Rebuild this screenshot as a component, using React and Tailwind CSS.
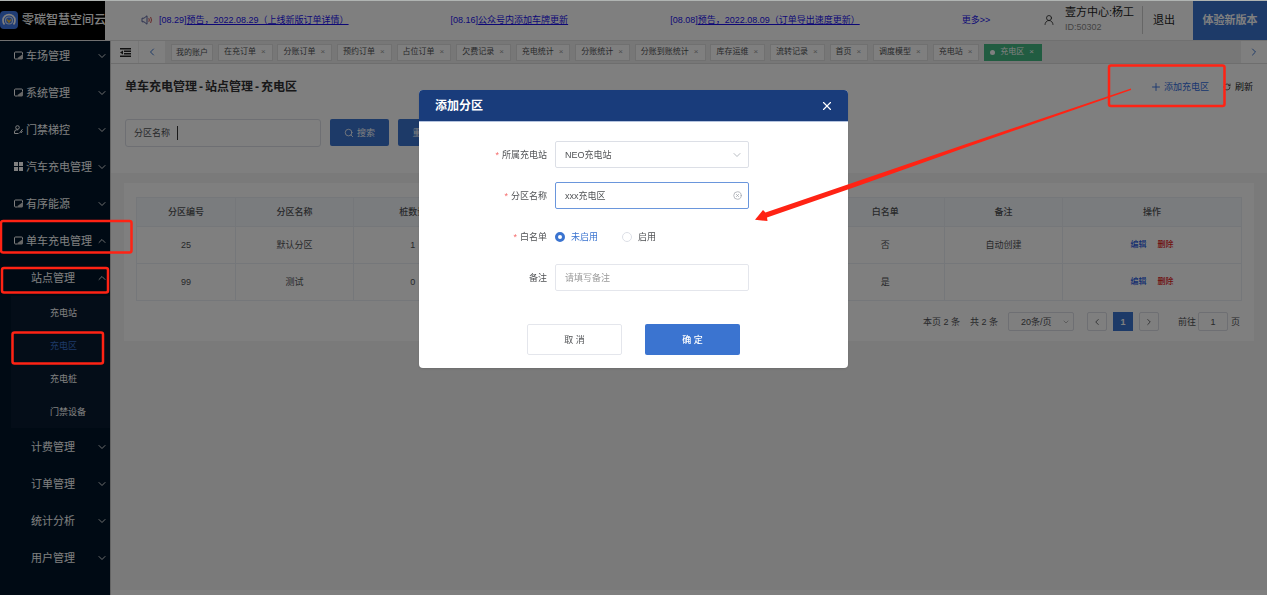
import { useState } from "react";
import {
  ChevronDown,
  ChevronLeft,
  ChevronRight,
  ChevronUp,
  CircleX,
  Plus,
  RotateCw,
  Search,
  UserRound,
  X,
} from "lucide-react";

const notices = [
  { date: "[08.29]", text: "预告，2022.08.29（上线新版订单详情）" },
  { date: "[08.16]", text: "公众号内添加车牌更新" },
  { date: "[08.08]", text: "预告，2022.08.09（订单导出速度更新）" },
];

const tabs = [
  "在充订单",
  "分账订单",
  "预约订单",
  "占位订单",
  "欠费记录",
  "充电统计",
  "分账统计",
  "分账到账统计",
  "库存运维",
  "流转记录",
  "首页",
  "调度模型",
  "充电站",
];

const menu = [
  { label: "车场管理", icon: "board" },
  { label: "系统管理", icon: "board" },
  { label: "门禁梯控", icon: "user" },
  { label: "汽车充电管理", icon: "grid" },
  { label: "有序能源", icon: "board" },
  { label: "单车充电管理", icon: "board", open: true },
];

const stationPages = ["充电站", "充电区", "充电桩", "门禁设备"];
const subMenu = ["计费管理", "订单管理", "统计分析", "用户管理"];

const zones = [
  { id: 25, name: "默认分区", piles: 1, whitelist: "否", remark: "自动创建" },
  { id: 99, name: "测试", piles: 0, whitelist: "是", remark: "" },
];

export default function App() {
  const [modalOpen, setModalOpen] = useState(true);

  return (
    <div className="flex min-h-screen flex-col bg-[#f4f4f4] font-['Liberation_Sans','Noto_Sans_CJK_SC',sans-serif] text-[9px] leading-4 text-[#505255]">
      <Header />

      <div className="flex flex-1">
        <Sidebar />

        <div className="flex min-w-0 flex-1 flex-col border-l border-[#c8c8c8]">
          <TabBar />
          <Toolbar onAdd={() => setModalOpen(true)} />
          <ZoneTable />
          <div className="mt-auto h-[5px] bg-white" />
        </div>
      </div>

      {modalOpen && <ZoneModal onClose={() => setModalOpen(false)} />}
      <Annotations />
    </div>
  );
}

// HEADER
function Header() {
  return (
    <header className="relative z-10 flex h-[41px] items-stretch border-b border-[#e0e0e0] bg-white">
      <div className="flex w-[105px] shrink-0 items-center gap-1 overflow-hidden bg-black text-xs font-medium whitespace-nowrap text-white">
        <Logo />
        零碳智慧空间云
      </div>

      <nav className="flex min-w-0 flex-1 items-center pl-9 whitespace-nowrap text-[#1a10ee]">
        <SpeakerIcon />
        <div className="ml-1.5 flex items-center gap-[102px]">
          {notices.map((n) => (
            <a key={n.date} href="#notice">
              {n.date}
              <span className="underline">{n.text}</span>
            </a>
          ))}
          <a href="#more">更多&gt;&gt;</a>
        </div>
      </nav>

      <div className="flex shrink-0 items-center text-[11px] text-[#222]">
        <UserRound className="mr-2.5 size-3" strokeWidth={1.6} />
        <div className="flex flex-col pb-0.5">
          <span className="leading-[15px]">壹方中心:杨工</span>
          <span className="text-[9px] leading-3.5 text-[#888]">ID:50302</span>
        </div>
        <button className="ml-2 h-7 border-l border-[#ccc] pr-[18px] pl-2.5">退出</button>
        <button className="h-full w-[74px] bg-[#3b74d0] font-bold text-white">
          体验新版本
        </button>
      </div>
    </header>
  );
}

// SIDEBAR
function Sidebar() {
  return (
    <aside className="w-[110px] shrink-0 bg-[#001529] text-[11px] text-white">
      <ul className="-mt-1">
        {menu.map((item) => (
          <li key={item.label}>
            <a href="#menu" className="flex h-[37px] items-center pr-0.5 pl-3.5">
              <MenuIcon name={item.icon} />
              <span className="ml-[3px] flex-1 whitespace-nowrap">{item.label}</span>
              <Arrow open={item.open} />
            </a>
          </li>
        ))}

        <li>
          <a href="#menu" className="flex h-[37px] items-center pr-0.5 pl-[31px]">
            <span className="flex-1">站点管理</span>
            <Arrow open />
          </a>
          <ul className="ml-[11px] bg-[#081a30] text-[9px]">
            {stationPages.map((page) => (
              <li key={page}>
                <a
                  href="#page"
                  className={
                    page === "充电区"
                      ? "flex h-[33px] items-center pl-[39px] text-[#3b74d0]"
                      : "flex h-[33px] items-center pl-[39px]"
                  }
                >
                  {page}
                </a>
              </li>
            ))}
          </ul>
        </li>

        {subMenu.map((label) => (
          <li key={label}>
            <a href="#menu" className="flex h-[37px] items-center pr-0.5 pl-[31px]">
              <span className="flex-1">{label}</span>
              <Arrow />
            </a>
          </li>
        ))}
      </ul>
    </aside>
  );
}

function Arrow({ open }) {
  const Icon = open ? ChevronUp : ChevronDown;
  return <Icon className="size-3 shrink-0 text-[#ddd]" strokeWidth={2} />;
}

// TABS
function TabBar() {
  return (
    <div className="flex h-[23px] items-center border-b border-[#ddd] bg-[#eeeeee] text-[8px] whitespace-nowrap">
      <div className="flex h-full w-[27px] items-center justify-center bg-white pl-0.5">
        <FoldIcon />
      </div>
      <button
        aria-label="向左"
        className="flex h-full w-[27px] items-center justify-center border-l border-[#eee] bg-white text-[#3b74d0]"
      >
        <ChevronLeft className="size-3" />
      </button>

      <div className="ml-1.5 flex w-[871px] justify-between">
        <button className="h-[17px] border border-[#e0e0e0] bg-white px-1">
          我的账户
        </button>
        {tabs.map((tab) => (
          <button
            key={tab}
            className="flex h-[17px] items-center gap-[5px] border border-[#e0e0e0] bg-white pr-1.5 pl-[5px]"
          >
            {tab}
            <span className="text-[#999]">×</span>
          </button>
        ))}
        <button className="flex h-[17px] items-center gap-[5px] bg-[#42b983] pr-2 pl-1.5 text-white">
          <span className="size-[5px] rounded-full bg-white" />
          充电区
          <span>×</span>
        </button>
      </div>

      <button
        aria-label="向右"
        className="ml-auto flex h-full w-[26px] items-center justify-center bg-white text-[#3b74d0]"
      >
        <ChevronRight className="size-3" />
      </button>
    </div>
  );
}

// SEARCH
function Toolbar({ onAdd }) {
  return (
    <div className="h-[109px] bg-white px-3.5 pt-[15px]">
      <div className="flex items-center justify-between">
        <h1 className="text-xs font-bold text-[#303133]">
          单车充电管理<span className="px-0.5">-</span>站点管理
          <span className="px-0.5">-</span>充电区
        </h1>
        <div className="flex items-center gap-3.5">
          <button onClick={onAdd} className="flex items-center gap-0.5 text-[#2f6ce0]">
            <Plus className="size-3" strokeWidth={1.8} />
            添加充电区
          </button>
          <button className="flex items-center gap-1 text-[#222]">
            <RotateCw className="size-2" />
            刷新
          </button>
        </div>
      </div>

      <div className="mt-6 flex items-start gap-[9px]">
        <div className="flex h-7 w-[196px] items-center rounded-[3px] border border-[#dcdfe6] px-2">
          <label htmlFor="zone">分区名称</label>
          <input
            id="zone"
            className="ml-[7px] h-3.5 min-w-0 flex-1 border-l border-[#333] px-1 outline-none"
          />
        </div>
        <button className="flex h-[27px] w-[59px] items-center justify-center gap-[3px] rounded-[2px] bg-[#3b74d0] text-white">
          <Search className="size-2.5" />
          搜索
        </button>
        <button className="h-[27px] w-[47px] rounded-[2px] bg-[#3b74d0] text-white">
          重置
        </button>
      </div>
    </div>
  );
}

// TABLE
function ZoneTable() {
  return (
    <section className="mx-[13px] mt-2.5 bg-[#fefefe] px-3 pt-3.5 pb-2.5">
      <table className="w-full table-fixed border-collapse text-center">
        <colgroup>
          <col className="w-[99px]" />
          <col span={7} />
          <col className="w-[179px]" />
        </colgroup>
        <thead>
          <tr className="h-[29px] bg-[#f5f8fc]">
            <Th>分区编号</Th>
            <Th>分区名称</Th>
            <Th>桩数量</Th>
            <Th />
            <Th />
            <Th />
            <Th>白名单</Th>
            <Th>备注</Th>
            <Th>操作</Th>
          </tr>
        </thead>
        <tbody>
          {zones.map((zone) => (
            <tr key={zone.id} className="h-[37px]">
              <Td>{zone.id}</Td>
              <Td>{zone.name}</Td>
              <Td>{zone.piles}</Td>
              <Td />
              <Td />
              <Td />
              <Td>{zone.whitelist}</Td>
              <Td>{zone.remark}</Td>
              <Td>
                <div className="flex justify-center gap-[11px] text-[8px] font-medium">
                  <button className="text-[#2459e0]">编辑</button>
                  <button className="text-[#e01818]">删除</button>
                </div>
              </Td>
            </tr>
          ))}
        </tbody>
      </table>

      <div className="mt-[11px] flex items-center justify-end">
        <span className="mr-2.5">本页 2 条</span>
        <span className="mr-2.5">共 2 条</span>
        <div className="relative">
          <select
            aria-label="每页条数"
            className="h-[19px] w-[66px] appearance-none rounded-[2px] border border-[#dcdfe6] pl-3"
          >
            <option>20条/页</option>
          </select>
          <ChevronDown className="pointer-events-none absolute top-1.5 right-1 size-2 text-[#999]" />
        </div>
        <button
          aria-label="上一页"
          className="ml-[13px] flex h-[19px] w-5 items-center justify-center rounded-[2px] border border-[#dcdfe6]"
        >
          <ChevronLeft className="size-2.5" />
        </button>
        <button className="ml-1.5 h-[19px] w-5 bg-[#3b74d0] font-bold text-white">1</button>
        <button
          aria-label="下一页"
          className="ml-1.5 flex h-[19px] w-5 items-center justify-center rounded-[2px] border border-[#dcdfe6]"
        >
          <ChevronRight className="size-2.5" />
        </button>
        <label htmlFor="page" className="ml-[19px]">
          前往
        </label>
        <input
          id="page"
          defaultValue="1"
          className="mr-[3px] ml-0.5 h-[19px] w-[30px] rounded-[2px] border border-[#dcdfe6] text-center"
        />
        <span className="pr-0.5">页</span>
      </div>
    </section>
  );
}

function Th({ children }) {
  return <th className="border border-[#ebeef5] p-0 font-medium">{children}</th>;
}

function Td({ children }) {
  return <td className="border border-[#ebeef5] p-0">{children}</td>;
}

// MODAL
function ZoneModal({ onClose }) {
  const [name, setName] = useState("xxx充电区");
  const [whitelist, setWhitelist] = useState(false);

  return (
    <div className="fixed inset-0 z-20 flex items-start justify-center border-t border-[#b0b4b2] bg-black/50 bg-clip-padding pt-[89px]">
      <div
        role="dialog"
        aria-label="添加分区"
        className="w-[429px] overflow-hidden rounded bg-white shadow"
      >
        <div className="flex h-8 items-center justify-between border-b border-[#b4c3de] bg-[#193c7b] px-4 text-white">
          <h2 className="text-xs font-bold">添加分区</h2>
          <button aria-label="关闭" onClick={onClose} className="-mr-0.5">
            <X className="size-3.5" />
          </button>
        </div>

        <form className="pt-[19px] pb-[13px]" onSubmit={(e) => e.preventDefault()}>
          <div className="flex flex-col gap-3.5">
            <Field label="所属充电站" id="station" required>
              <select
                id="station"
                className="h-[27px] w-full appearance-none rounded-[2px] border border-[#dcdfe6] px-[9px]"
              >
                <option>NEO充电站</option>
              </select>
              <ChevronDown
                className="pointer-events-none absolute top-2 right-1.5 size-3 text-[#b0b4bb]"
                strokeWidth={1.8}
              />
            </Field>

            <Field label="分区名称" id="name" required>
              <input
                id="name"
                value={name}
                onChange={(e) => setName(e.target.value)}
                className="h-[27px] w-full rounded-[2px] border border-[#6a96dc] px-[9px] outline-none"
              />
              <button
                type="button"
                aria-label="清空"
                onClick={() => setName("")}
                className="absolute top-[9px] right-[7px] text-[#a0a4ab]"
              >
                <CircleX className="size-[9px]" />
              </button>
            </Field>

            <Field label="白名单" required>
              <div className="flex h-[27px] items-center gap-6">
                <Radio
                  label="未启用"
                  checked={!whitelist}
                  onChange={() => setWhitelist(false)}
                />
                <Radio
                  label="启用"
                  checked={whitelist}
                  onChange={() => setWhitelist(true)}
                />
              </div>
            </Field>

            <Field label="备注" id="remark">
              <input
                id="remark"
                placeholder="请填写备注"
                className="h-[27px] w-full rounded-[2px] border border-[#e4e6ec] px-[9px] outline-none placeholder:text-[#999]"
              />
            </Field>
          </div>

          <div className="mt-[33px] flex justify-center gap-[23px]">
            <button
              type="button"
              onClick={onClose}
              className="h-[31px] w-[95px] rounded-[2px] border border-[#e4e6ec]"
            >
              取 消
            </button>
            <button
              type="submit"
              className="h-[31px] w-[95px] rounded-[2px] bg-[#3b74d0] font-medium text-white"
            >
              确 定
            </button>
          </div>
        </form>
      </div>
    </div>
  );
}

function Field({ label, id, required, children }) {
  return (
    <div className="flex items-center gap-2">
      <label htmlFor={id} className="w-32 text-right">
        {required && <span className="mr-[3px] text-[#f56c6c]">*</span>}
        {label}
      </label>
      <div className="relative w-[194px]">{children}</div>
    </div>
  );
}

function Radio({ label, checked, onChange }) {
  return (
    <label className={checked ? "flex items-center gap-1.5 text-[#3b74d0]" : "flex items-center gap-1.5"}>
      <input
        type="radio"
        name="whitelist"
        checked={checked}
        onChange={onChange}
        className="size-2.5 appearance-none rounded-full border border-[#dcdfe6] bg-white checked:border-3 checked:border-[#3b74d0]"
      />
      {label}
    </label>
  );
}

// Marcas vermelhas do passo a passo
function Annotations() {
  return (
    <svg
      className="pointer-events-none fixed inset-0 z-30 h-full w-full"
      fill="none"
      stroke="#ff2314"
      strokeWidth="2.5"
      aria-hidden="true"
    >
      <rect x="1" y="221" width="130.500" height="31.500" rx="2" />
      <rect x="2" y="268" width="106" height="24.500" rx="2" />
      <rect x="12.500" y="332.500" width="90.500" height="31" rx="2" />
      <rect x="1109" y="65.500" width="115.500" height="40.500" rx="2" />
      <path
        d="M1131 88.500 L967 143.700 L855 182 L765.500 212.500 L763 210 L755 219.700 L767.500 221 L767 217.500 L855 187 L967 147 L1131 90 Z"
        fill="#ff2314"
        stroke="none"
      />
    </svg>
  );
}

// ICONS
function Logo() {
  return (
    <svg className="size-[18px] shrink-0" viewBox="0 0 18 18" fill="none">
      <rect width="18" height="18" rx="4" fill="#3f78e8" />
      <path d="M4.500 13.500a6 6 0 1 1 9 0" stroke="#fff" strokeWidth="1.700" />
      <circle cx="9" cy="9.500" r="3.500" stroke="#cfe0ff" strokeWidth="1.200" />
      <path d="M7 8.500l2 2.500 2-2.500" stroke="#f0c040" strokeWidth="1.500" />
    </svg>
  );
}

function SpeakerIcon() {
  return (
    <svg className="size-3 shrink-0" viewBox="0 0 12 12" fill="none">
      <path d="M1 4.200h2L6 1.800v8.400L3 7.800H1z" stroke="#5a62a0" strokeLinejoin="round" />
      <path d="M7.800 4.200q1 1.800 0 3.600M9.600 3q1.800 3 0 6" stroke="#d05050" />
    </svg>
  );
}

function FoldIcon() {
  return (
    <svg className="h-[9px] w-[11px]" viewBox="0 0 11 9" fill="#222">
      <path d="M0 0h11v1.400H0zM4 2.500h7v1.400H4zM4 5h7v1.400H4zM0 7.600h11V9H0zM0 4.500l3-2v4z" />
    </svg>
  );
}

function MenuIcon({ name }) {
  return (
    <svg className="size-[9px] shrink-0" viewBox="0 0 9 9" fill="none" stroke="#fff">
      {name === "board" && (
        <>
          <path d="M3.500 8H1.500a1 1 0 0 1-1-1V2a1 1 0 0 1 1-1h6a1 1 0 0 1 1 1v1.500" />
          <path d="M3.500 8.500h4.500l1-1V3L3.500 7z" fill="#ccc" stroke="none" />
        </>
      )}
      {name === "user" && (
        <>
          <circle cx="3.500" cy="2.500" r="1.800" />
          <path d="M.5 8.500V7a2.200 2.200 0 0 1 2.200-2.200h1.500M.5 8.500h4M5.500 8.200l3-4M7 8l1.500-2" />
        </>
      )}
      {name === "grid" && (
        <path d="M0 0h4v4H0zM5 0h4v4H5zM0 5h4v4H0zM5 5h4v4H5z" fill="#fff" stroke="none" />
      )}
    </svg>
  );
}
